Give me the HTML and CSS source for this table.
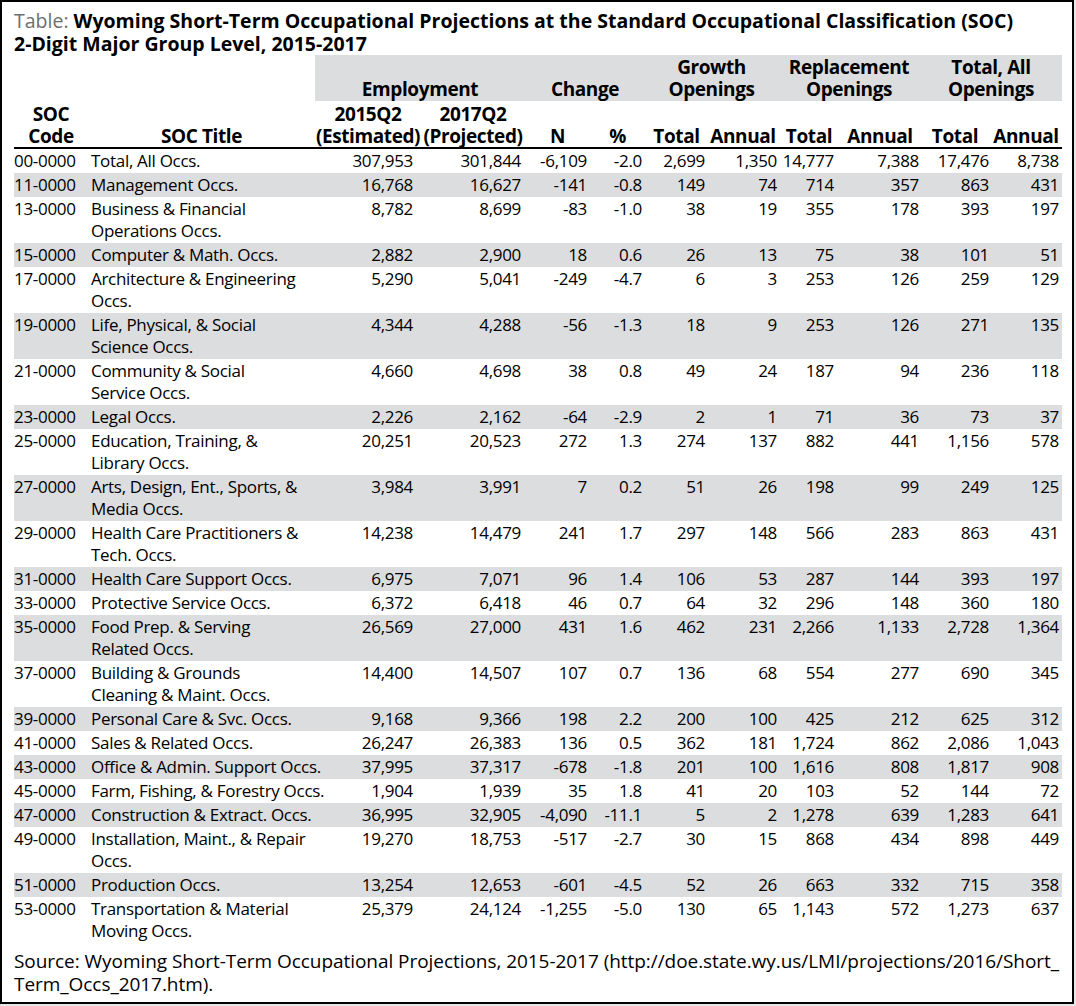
FILE: index.html
```html
<!DOCTYPE html>
<html lang="en">
<head>
<meta charset="utf-8">
<title>Wyoming Short-Term Occupational Projections</title>
<link rel="stylesheet" href="styles.css">
</head>
<body>
<div class="frame">
  <h1 class="title"><span class="label">Table:</span> Wyoming Short-Term Occupational Projections at the Standard Occupational Classification (SOC)<br>2-Digit Major Group Level, 2015-2017</h1>
  <table class="proj">
    <colgroup>
      <col class="c-code"><col class="c-title"><col class="c-e1"><col class="c-e2">
      <col class="c-n"><col class="c-pct"><col class="c-gt"><col class="c-ga">
      <col class="c-rt"><col class="c-ra"><col class="c-tt"><col class="c-ta">
    </colgroup>
    <thead>
      <tr class="group">
        <th class="blank"></th><th class="blank"></th>
        <th colspan="2" class="band">Employment</th>
        <th colspan="2" class="band">Change</th>
        <th colspan="2" class="band">Growth<br>Openings</th>
        <th colspan="2" class="band">Replacement<br>Openings</th>
        <th colspan="2" class="band">Total, All<br>Openings</th>
      </tr>
      <tr class="sub">
        <th>SOC<br>Code</th><th>SOC Title</th>
        <th>2015Q2<br>(Estimated)</th><th>2017Q2<br>(Projected)</th>
        <th>N</th><th>%</th>
        <th>Total</th><th>Annual</th>
        <th>Total</th><th>Annual</th>
        <th>Total</th><th>Annual</th>
      </tr>
    </thead>
    <tbody>
      <tr><td>00-0000</td><td>Total, All Occs.</td><td>307,953</td><td>301,844</td><td>-6,109</td><td>-2.0</td><td>2,699</td><td>1,350</td><td>14,777</td><td>7,388</td><td>17,476</td><td>8,738</td></tr>
      <tr><td>11-0000</td><td>Management Occs.</td><td>16,768</td><td>16,627</td><td>-141</td><td>-0.8</td><td>149</td><td>74</td><td>714</td><td>357</td><td>863</td><td>431</td></tr>
      <tr><td>13-0000</td><td>Business &amp; Financial<br>Operations Occs.</td><td>8,782</td><td>8,699</td><td>-83</td><td>-1.0</td><td>38</td><td>19</td><td>355</td><td>178</td><td>393</td><td>197</td></tr>
      <tr><td>15-0000</td><td>Computer &amp; Math. Occs.</td><td>2,882</td><td>2,900</td><td>18</td><td>0.6</td><td>26</td><td>13</td><td>75</td><td>38</td><td>101</td><td>51</td></tr>
      <tr><td>17-0000</td><td>Architecture &amp; Engineering<br>Occs.</td><td>5,290</td><td>5,041</td><td>-249</td><td>-4.7</td><td>6</td><td>3</td><td>253</td><td>126</td><td>259</td><td>129</td></tr>
      <tr><td>19-0000</td><td>Life, Physical, &amp; Social<br>Science Occs.</td><td>4,344</td><td>4,288</td><td>-56</td><td>-1.3</td><td>18</td><td>9</td><td>253</td><td>126</td><td>271</td><td>135</td></tr>
      <tr><td>21-0000</td><td>Community &amp; Social<br>Service Occs.</td><td>4,660</td><td>4,698</td><td>38</td><td>0.8</td><td>49</td><td>24</td><td>187</td><td>94</td><td>236</td><td>118</td></tr>
      <tr><td>23-0000</td><td>Legal Occs.</td><td>2,226</td><td>2,162</td><td>-64</td><td>-2.9</td><td>2</td><td>1</td><td>71</td><td>36</td><td>73</td><td>37</td></tr>
      <tr><td>25-0000</td><td>Education, Training, &amp;<br>Library Occs.</td><td>20,251</td><td>20,523</td><td>272</td><td>1.3</td><td>274</td><td>137</td><td>882</td><td>441</td><td>1,156</td><td>578</td></tr>
      <tr><td>27-0000</td><td>Arts, Design, Ent., Sports, &amp;<br>Media Occs.</td><td>3,984</td><td>3,991</td><td>7</td><td>0.2</td><td>51</td><td>26</td><td>198</td><td>99</td><td>249</td><td>125</td></tr>
      <tr><td>29-0000</td><td>Health Care Practitioners &amp;<br>Tech. Occs.</td><td>14,238</td><td>14,479</td><td>241</td><td>1.7</td><td>297</td><td>148</td><td>566</td><td>283</td><td>863</td><td>431</td></tr>
      <tr><td>31-0000</td><td>Health Care Support Occs.</td><td>6,975</td><td>7,071</td><td>96</td><td>1.4</td><td>106</td><td>53</td><td>287</td><td>144</td><td>393</td><td>197</td></tr>
      <tr><td>33-0000</td><td>Protective Service Occs.</td><td>6,372</td><td>6,418</td><td>46</td><td>0.7</td><td>64</td><td>32</td><td>296</td><td>148</td><td>360</td><td>180</td></tr>
      <tr><td>35-0000</td><td>Food Prep. &amp; Serving<br>Related Occs.</td><td>26,569</td><td>27,000</td><td>431</td><td>1.6</td><td>462</td><td>231</td><td>2,266</td><td>1,133</td><td>2,728</td><td>1,364</td></tr>
      <tr><td>37-0000</td><td>Building &amp; Grounds<br>Cleaning &amp; Maint. Occs.</td><td>14,400</td><td>14,507</td><td>107</td><td>0.7</td><td>136</td><td>68</td><td>554</td><td>277</td><td>690</td><td>345</td></tr>
      <tr><td>39-0000</td><td>Personal Care &amp; Svc. Occs.</td><td>9,168</td><td>9,366</td><td>198</td><td>2.2</td><td>200</td><td>100</td><td>425</td><td>212</td><td>625</td><td>312</td></tr>
      <tr><td>41-0000</td><td>Sales &amp; Related Occs.</td><td>26,247</td><td>26,383</td><td>136</td><td>0.5</td><td>362</td><td>181</td><td>1,724</td><td>862</td><td>2,086</td><td>1,043</td></tr>
      <tr><td>43-0000</td><td>Office &amp; Admin. Support Occs.</td><td>37,995</td><td>37,317</td><td>-678</td><td>-1.8</td><td>201</td><td>100</td><td>1,616</td><td>808</td><td>1,817</td><td>908</td></tr>
      <tr><td>45-0000</td><td>Farm, Fishing, &amp; Forestry Occs.</td><td>1,904</td><td>1,939</td><td>35</td><td>1.8</td><td>41</td><td>20</td><td>103</td><td>52</td><td>144</td><td>72</td></tr>
      <tr><td>47-0000</td><td>Construction &amp; Extract. Occs.</td><td>36,995</td><td>32,905</td><td>-4,090</td><td>-11.1</td><td>5</td><td>2</td><td>1,278</td><td>639</td><td>1,283</td><td>641</td></tr>
      <tr><td>49-0000</td><td>Installation, Maint., &amp; Repair<br>Occs.</td><td>19,270</td><td>18,753</td><td>-517</td><td>-2.7</td><td>30</td><td>15</td><td>868</td><td>434</td><td>898</td><td>449</td></tr>
      <tr><td>51-0000</td><td>Production Occs.</td><td>13,254</td><td>12,653</td><td>-601</td><td>-4.5</td><td>52</td><td>26</td><td>663</td><td>332</td><td>715</td><td>358</td></tr>
      <tr><td>53-0000</td><td>Transportation &amp; Material<br>Moving Occs.</td><td>25,379</td><td>24,124</td><td>-1,255</td><td>-5.0</td><td>130</td><td>65</td><td>1,143</td><td>572</td><td>1,273</td><td>637</td></tr>
    </tbody>
  </table>
  <p class="source">Source: Wyoming Short-Term Occupational Projections, 2015-2017 (http://doe.state.wy.us/LMI/projections/2016/Short_<br>Term_Occs_2017.htm).</p>
</div>
</body>
</html>
```

FILE: styles.css
```css
html, body {
  margin: 0;
  padding: 0;
  background: #e6e6e6;
}

body {
  font-family: "Open Sans", "Noto Sans", "Liberation Sans", sans-serif;
  color: #000;
}

.frame {
  box-sizing: border-box;
  width: 1074px;
  height: 1004px;
  background: #fff;
  border: 2px solid #000;
  padding: 7px 10px 0 12px;
  overflow: hidden;
}

.title {
  margin: 0;
  font-size: 19.5px;
  line-height: 23px;
  font-weight: 700;
  white-space: nowrap;
}

.title .label {
  font-weight: 400;
  color: #6d6e71;
}

.proj {
  margin-top: 0;
  width: 1048px;
  border-collapse: collapse;
  table-layout: fixed;
  font-size: 17px;
  letter-spacing: -0.3px;
}

.c-code { width: 74px; }
.c-title { width: 227px; }
.c-e1 { width: 106px; }
.c-e2 { width: 104px; }
.c-n { width: 65px; }
.c-pct { width: 55px; }
.c-gt { width: 63px; }
.c-ga { width: 70px; }
.c-rt { width: 62px; }
.c-ra { width: 80px; }
.c-tt { width: 70px; }
.c-ta { width: 72px; }

.proj th {
  font-size: 19px;
  font-weight: 700;
  letter-spacing: -0.4px;
  line-height: 22px;
  padding: 1px 0;
  vertical-align: bottom;
  text-align: center;
  white-space: nowrap;
}

.group .band {
  background: #dcdddf;
}

.sub th {
  border-bottom: 2px solid #000;
  line-height: 22px;
  padding: 2px 0 0;
}

.proj td {
  line-height: 22px;
  padding: 1px 3px 1px 0;
  text-align: right;
  vertical-align: top;
  white-space: nowrap;
}

.proj td:nth-child(1) {
  text-align: left;
  padding: 1px 0;
}

.proj td:nth-child(2) {
  text-align: left;
  padding: 1px 0 1px 3px;
}

.proj td:nth-child(3) { padding-right: 8px; }
.proj td:nth-child(4) { padding-right: 4px; }
.proj td:nth-child(8) { padding-right: 1px; }
.proj td:nth-child(9) { padding-right: 6px; }
.proj td:nth-child(10) { padding-right: 1px; }
.proj td:nth-child(11) { padding-right: 1px; }

.proj tbody tr:nth-child(even) {
  background: #dcdddf;
}

.source {
  margin: 7px 0 0;
  font-size: 19px;
  line-height: 23px;
  letter-spacing: -0.05px;
  white-space: nowrap;
}
```
